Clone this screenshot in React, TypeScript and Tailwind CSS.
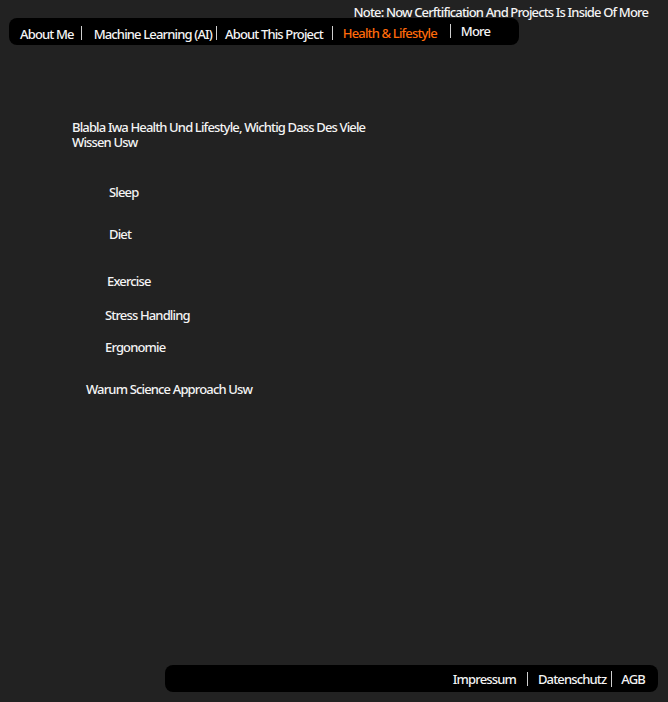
export default function App() {
  const font = { fontFamily: '"Noto Sans", "Open Sans", sans-serif' };
  return (
    <div className="w-[668px] h-[702px] bg-[#222222] text-[#f4f4f4] flex flex-col text-[13px] font-medium tracking-[-0.85px]" style={font}>
      <div className="flex justify-end pr-[20px] pt-[3px] h-[18px] leading-[18px]">
        <span>Note: Now Cerftification And Projects Is Inside Of More</span>
      </div>
      <nav className="ml-[9px] w-[510px] h-[27px] bg-black rounded-[8px] flex items-center pl-[11px] leading-[16px]">
        <span className="pt-[4px]">About Me</span>
        <span className="w-px h-[14px] bg-[#cfcfcf] ml-[7px] mr-[12px] mt-[2px]" />
        <span className="pt-[4px]">Machine Learning (AI)</span>
        <span className="w-px h-[14px] bg-[#cfcfcf] ml-[4px] mr-[8px] mt-[2px]" />
        <span className="pt-[4px]">About This Project</span>
        <span className="w-px h-[14px] bg-[#cfcfcf] ml-[9px] mr-[10px] mt-[2px]" />
        <span className="pt-[2px] text-[#ff6a0a]">Health &amp; Lifestyle</span>
        <span className="w-px h-[14px] bg-[#cfcfcf] ml-[13px] mr-[10px] -mt-[2px]" />
        <span className="-mt-[2px]">More</span>
      </nav>
      <main className="flex-1 flex flex-col">
        <p className="ml-[72px] mt-[75px] w-[310px] leading-[15px]">
          Blabla Iwa Health Und Lifestyle, Wichtig Dass Des Viele Wissen Usw
        </p>
        <div className="ml-[109px] mt-[34px] leading-[16px]">Sleep</div>
        <div className="ml-[109px] mt-[26px] leading-[16px]">Diet</div>
        <div className="ml-[107px] mt-[31px] leading-[16px]">Exercise</div>
        <div className="ml-[105px] mt-[18px] leading-[16px]">Stress Handling</div>
        <div className="ml-[105px] mt-[16px] leading-[16px]">Ergonomie</div>
        <div className="ml-[86px] mt-[26px] leading-[16px]">Warum Science Approach Usw</div>
      </main>
      <footer className="ml-[165px] mb-[10px] w-[493px] h-[27px] bg-black rounded-[8px] flex items-center justify-end pr-[13px] leading-[16px]">
        <span>Impressum</span>
        <span className="w-px h-[14px] bg-[#cfcfcf] ml-[11px] mr-[10px]" />
        <span>Datenschutz</span>
        <span className="w-px h-[16px] bg-[#cfcfcf] ml-[5px] mr-[9px]" />
        <span>AGB</span>
      </footer>
    </div>
  );
}
